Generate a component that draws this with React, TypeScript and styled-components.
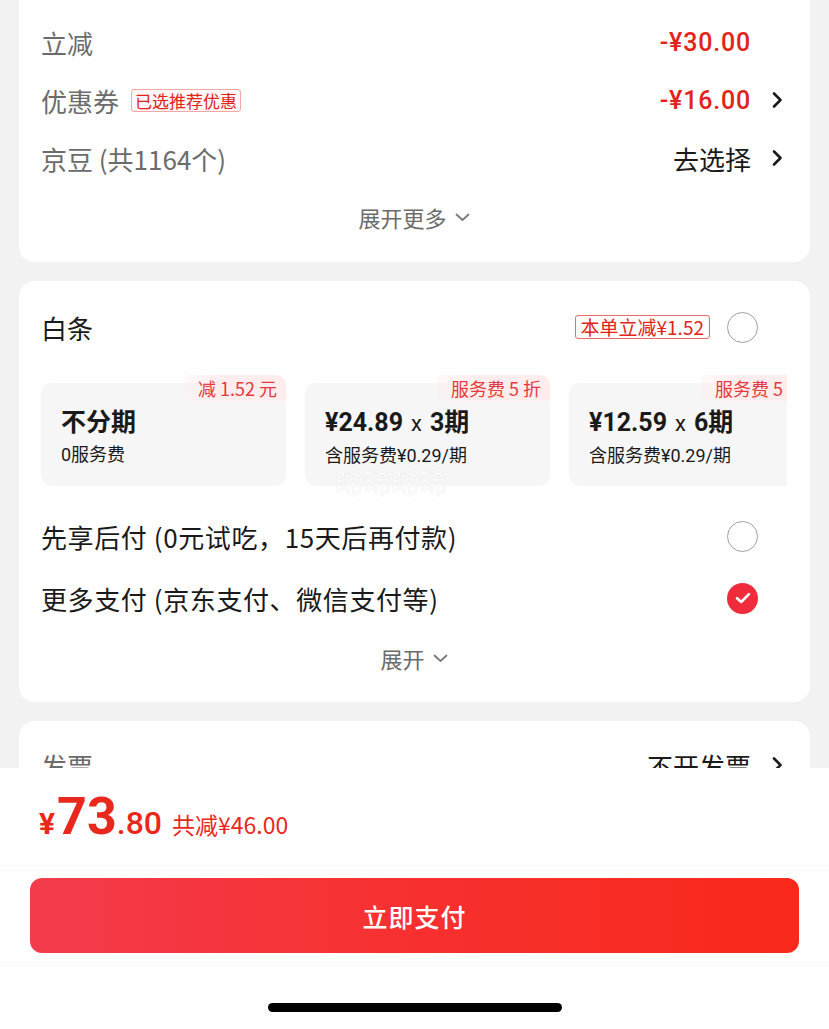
import React from "react";
import styled, { createGlobalStyle } from "styled-components";

const GlobalStyle = createGlobalStyle`
  html, body { margin: 0; padding: 0; background: #f2f2f2; }
  * { box-sizing: border-box; }
  body { font-family: "Noto Sans CJK SC", "Noto Sans", sans-serif; }
`;

const NUM = `"Roboto", "Noto Sans CJK SC", sans-serif`;
const CJK = `"Noto Sans CJK SC", "Noto Sans", sans-serif`;

const Screen = styled.div`
  position: relative;
  width: 829px;
  height: 1029px;
  overflow: hidden;
  display: flex;
  flex-direction: column;
  background: #f2f2f2;
`;

const Scroll = styled.div`
  flex: 1;
  overflow: hidden;
  padding: 0 19px;
  display: flex;
  flex-direction: column;
  gap: 19px;
`;

const Card = styled.div<{ $top?: number; $pt: number; $pb: number }>`
  background: #fff;
  border-radius: 16px;
  margin-top: ${(p) => p.$top ?? 0}px;
  padding: ${(p) => p.$pt}px 23px ${(p) => p.$pb}px 22px;
  flex-shrink: 0;
`;

const Row = styled.div<{ $h: number; $mt?: number }>`
  height: ${(p) => p.$h}px;
  margin-top: ${(p) => p.$mt ?? 0}px;
  display: flex;
  align-items: center;
  justify-content: space-between;
`;

const Label = styled.span<{ $dark?: boolean; $spaced?: boolean }>`
  font-family: ${CJK};
  font-size: 26px;
  color: ${(p) => (p.$dark ? "#1a1a1a" : "#6b6b6b")};
  letter-spacing: ${(p) => (p.$spaced ? "0.6px" : "0")};
  display: flex;
  align-items: center;
  gap: 12px;
  white-space: nowrap;
`;

const Right = styled.div`
  display: flex;
  align-items: center;
`;

const Value = styled.span<{ $red?: boolean }>`
  font-family: ${(p) => (p.$red ? NUM : CJK)};
  font-size: ${(p) => (p.$red ? 25 : 26)}px;
  font-weight: ${(p) => (p.$red ? 500 : 400)};
  letter-spacing: ${(p) => (p.$red ? "0.8px" : "0")};
  color: ${(p) => (p.$red ? "#e2231a" : "#1a1a1a")};
  white-space: nowrap;
`;

const ArrowSlot = styled.span`
  width: 36px;
  padding-right: 4px;
  display: flex;
  justify-content: flex-end;
`;

const CouponTag = styled.span`
  font-family: ${CJK};
  font-size: 17px;
  line-height: 21px;
  color: #e2231a;
  border: 1px solid #f3a7a7;
  background: #fff7f7;
  border-radius: 3px;
  padding: 0 3px;
`;

const ExpandRow = styled.div<{ $h: number }>`
  height: ${(p) => p.$h}px;
  display: flex;
  align-items: center;
  justify-content: center;
  gap: 8px;
  font-family: ${CJK};
  font-size: 22px;
  color: #6b6b6b;
`;

const HeaderBadge = styled.span`
  font-family: ${CJK};
  font-size: 19px;
  line-height: 22px;
  color: #e2231a;
  border: 1px solid #e96a6a;
  border-radius: 3px;
  padding: 0 5px;
  margin-right: 17px;
  white-space: nowrap;
`;

const Radio = styled.span<{ $on?: boolean }>`
  width: 31px;
  height: 31px;
  border-radius: 50%;
  margin-right: 29px;
  display: flex;
  align-items: center;
  justify-content: center;
  border: ${(p) => (p.$on ? "none" : "1.5px solid #a0a0a0")};
  background: ${(p) => (p.$on ? "#ef2b3c" : "#fff")};
  flex-shrink: 0;
`;

const PlanList = styled.div`
  display: flex;
  gap: 19px;
  overflow: hidden;
  padding-top: 8px;
  margin-top: 19px;
`;

const Plan = styled.div`
  position: relative;
  flex-shrink: 0;
  width: 245px;
  height: 103px;
  border-radius: 10px;
  background: #f6f6f6;
  padding: 24px 20px 0 20px;
  display: flex;
  flex-direction: column;
  gap: 5px;
`;

const PlanTag = styled.span`
  position: absolute;
  top: -8px;
  right: 0;
  height: 26px;
  padding: 0 9px 0 14px;
  display: flex;
  align-items: center;
  font-family: ${CJK};
  font-size: 18px;
  color: #e4393c;
  background: linear-gradient(90deg, rgba(255, 236, 236, 0.3), #ffecec 40%);
  border-radius: 4px 10px 0 10px;
  white-space: nowrap;
`;

const PlanTitle = styled.span`
  font-family: ${NUM};
  font-size: 25px;
  font-weight: 700;
  color: #1a1a1a;
  line-height: 31px;
  white-space: nowrap;
`;

const PlanSub = styled.span`
  font-family: ${NUM};
  font-size: 18px;
  color: #1a1a1a;
  line-height: 23px;
  white-space: nowrap;
`;

const Times = styled.span`
  font-weight: 400;
  font-size: 22px;
  margin: 0 8px;
`;

const Watermark = styled.span`
  position: absolute;
  left: 335px;
  top: 462px;
  font-family: ${CJK};
  font-size: 28px;
  color: rgba(255, 255, 255, 0.85);
  text-shadow: 0 0 1px rgba(0, 0, 0, 0.12);
  pointer-events: none;
`;

const Bottom = styled.div`
  flex-shrink: 0;
  height: 261px;
  background: #fff;
  display: flex;
  flex-direction: column;
`;

const PriceRow = styled.div`
  height: 102px;
  padding: 23px 0 0 39px;
  display: flex;
  align-items: baseline;
  color: #e8281d;
  font-family: ${NUM};
`;

const Yen = styled.span`
  font-size: 30px;
  font-weight: 700;
  margin-right: 2px;
`;

const Big = styled.span`
  font-size: 52px;
  font-weight: 700;
  line-height: 1;
`;

const Small = styled.span`
  font-size: 32px;
  font-weight: 500;
`;

const Saved = styled.span`
  font-family: ${CJK};
  font-size: 23px;
  margin-left: 10px;
`;

const ButtonArea = styled.div`
  height: 93px;
  padding: 7px 30px 11px;
  border-top: 1px solid #f8f8f8;
  border-bottom: 1px solid #f8f8f8;
`;

const PayButton = styled.button`
  width: 100%;
  height: 75px;
  border: none;
  border-radius: 12px;
  background: linear-gradient(90deg, #f33b4c 0%, #f7302f 50%, #f9291b 100%);
  color: #fff;
  font-family: ${CJK};
  font-size: 25px;
  font-weight: 500;
  letter-spacing: 1px;
`;

const HomeArea = styled.div`
  flex: 1;
  display: flex;
  justify-content: center;
  padding-top: 40px;
`;

const HomeBar = styled.div`
  width: 294px;
  height: 9px;
  border-radius: 5px;
  background: #000;
`;

const ChevronRight = () => (
  <svg width="12" height="18" viewBox="0 0 12 18">
    <path d="M3 2.5 L9.5 9 L3 15.5" fill="none" stroke="#1a1a1a" strokeWidth="2.6" strokeLinecap="round" strokeLinejoin="round" />
  </svg>
);

const ChevronDown = () => (
  <svg width="15" height="9" viewBox="0 0 15 9">
    <path d="M1.5 1.5 L7.5 7 L13.5 1.5" fill="none" stroke="#7a7a7a" strokeWidth="1.8" strokeLinecap="round" strokeLinejoin="round" />
  </svg>
);

const Check = () => (
  <svg width="16" height="12" viewBox="0 0 16 12">
    <path d="M2 6.2 L6.2 10 L14 2.2" fill="none" stroke="#fff" strokeWidth="2.6" strokeLinecap="round" strokeLinejoin="round" />
  </svg>
);

const plans = [
  { tag: "减 1.52 元", title: <>不分期</>, sub: "0服务费" },
  { tag: "服务费 5 折", title: <>¥24.89<Times>x</Times>3期</>, sub: "含服务费¥0.29/期" },
  { tag: "服务费 5 折", title: <>¥12.59<Times>x</Times>6期</>, sub: "含服务费¥0.29/期" },
];

export default function App() {
  return (
    <Screen>
      <GlobalStyle />
      <Scroll>
        <Card $top={-20} $pt={33} $pb={15}>
          <Row $h={58}>
            <Label>立减</Label>
            <Right>
              <Value $red>-¥30.00</Value>
              <ArrowSlot />
            </Right>
          </Row>
          <Row $h={58}>
            <Label>
              优惠券<CouponTag>已选推荐优惠</CouponTag>
            </Label>
            <Right>
              <Value $red>-¥16.00</Value>
              <ArrowSlot>
                <ChevronRight />
              </ArrowSlot>
            </Right>
          </Row>
          <Row $h={58}>
            <Label>京豆 (共1164个)</Label>
            <Right>
              <Value>去选择</Value>
              <ArrowSlot>
                <ChevronRight />
              </ArrowSlot>
            </Right>
          </Row>
          <ExpandRow $h={60}>
            展开更多
            <ChevronDown />
          </ExpandRow>
        </Card>

        <Card $pt={17} $pb={15}>
          <Row $h={58}>
            <Label $dark>白条</Label>
            <Right>
              <HeaderBadge>本单立减¥1.52</HeaderBadge>
              <Radio />
            </Right>
          </Row>
          <PlanList>
            {plans.map((p, i) => (
              <Plan key={i}>
                <PlanTag>{p.tag}</PlanTag>
                <PlanTitle>{p.title}</PlanTitle>
                <PlanSub>{p.sub}</PlanSub>
              </Plan>
            ))}
          </PlanList>
          <Row $h={62} $mt={19}>
            <Label $dark $spaced>先享后付 (0元试吃，15天后再付款)</Label>
            <Radio />
          </Row>
          <Row $h={62}>
            <Label $dark $spaced>更多支付 (京东支付、微信支付等)</Label>
            <Radio $on>
              <Check />
            </Radio>
          </Row>
          <ExpandRow $h={58}>
            展开
            <ChevronDown />
          </ExpandRow>
        </Card>

        <Card $pt={15} $pb={15}>
          <Row $h={58}>
            <Label>发票</Label>
            <Right>
              <Value>不开发票</Value>
              <ArrowSlot>
                <ChevronRight />
              </ArrowSlot>
            </Right>
          </Row>
        </Card>
      </Scroll>

      <Bottom>
        <PriceRow>
          <Yen>¥</Yen>
          <Big>73</Big>
          <Small>.80</Small>
          <Saved>共减¥46.00</Saved>
        </PriceRow>
        <ButtonArea>
          <PayButton>立即支付</PayButton>
        </ButtonArea>
        <HomeArea>
          <HomeBar />
        </HomeArea>
      </Bottom>

      <Watermark>晞晞晞晞</Watermark>
    </Screen>
  );
}
